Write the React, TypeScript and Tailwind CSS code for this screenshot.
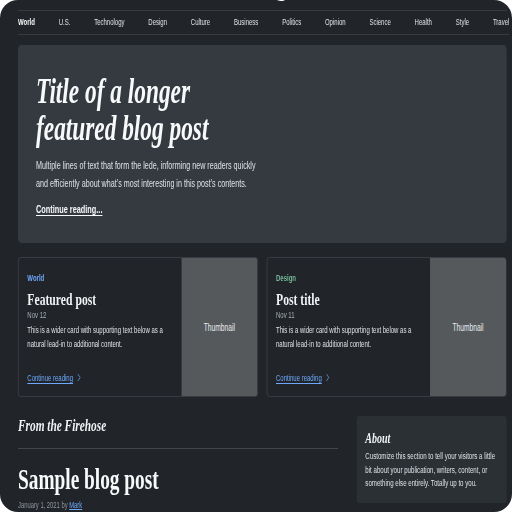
const sans = "font-['Liberation_Sans',Arial,sans-serif]";
const serif = "font-['Liberation_Serif','Times_New_Roman',serif]";

const navItems = [
  "World",
  "U.S.",
  "Technology",
  "Design",
  "Culture",
  "Business",
  "Politics",
  "Opinion",
  "Science",
  "Health",
  "Style",
  "Travel",
];

function Chevron() {
  return (
    <svg width="9" height="9" viewBox="0 0 16 16" className="inline-block ml-[4px] align-[-1px]">
      <path d="M5 2l6 6-6 6" fill="none" stroke="currentColor" strokeWidth="1.4" />
    </svg>
  );
}

function Card({ tag, tagColor, title, date }: { tag: string; tagColor: string; title: string; date: string }) {
  return (
    <div className="flex h-[140px] rounded-[4px] border border-[#3d4248] bg-[#212529] overflow-hidden">
      <div className="flex-1 flex flex-col pt-[14px] pb-[12px] px-[13px]">
        <div className={`text-[9px] leading-[12px] font-bold ${tagColor}`}>{tag}</div>
        <div className={`${serif} mt-[5px] text-[17.5px] leading-[20px] font-bold text-[#f1f3f5]`}>{title}</div>
        <div className="text-[9px] leading-[12px] text-[#a7adb3]">{date}</div>
        <p className="mt-[2px] text-[9px] leading-[14px] text-[#dee2e6]">
          This is a wider card with supporting text below as a natural lead-in to additional content.
        </p>
        <div className="mt-auto text-[9px] leading-[12px] text-[#6ea8fe]">
          <span className="underline underline-offset-2">Continue reading</span>
          <Chevron />
        </div>
      </div>
      <div className="w-[114px] bg-[#55595c] flex items-center justify-center text-[10px] text-[#e9ecef]">
        Thumbnail
      </div>
    </div>
  );
}

export default function App() {
  return (
    <div className="w-[512px] h-[512px] overflow-hidden rounded-[18px] bg-[#212529]">
      <div className={`w-[768px] origin-top-left scale-x-[0.6667] pl-[27px] pr-[8px] text-[#dee2e6] ${sans}`}>
        <header className="h-[11px] border-b border-[#383c41] overflow-hidden flex justify-center items-end pl-[10px]">
          <span className={`${serif} font-bold text-[40px] leading-none mb-[11px] text-[#f8f9fa]`}>Large</span>
        </header>
        <nav className="h-[24px] border-b border-[#383c41] flex items-center justify-between -mr-[4px] text-[9px] text-[#dee2e6]">
          {navItems.map((n, i) => (
            <span key={n} className={i === 0 ? "font-bold text-[#f8f9fa]" : ""}>
              {n}
            </span>
          ))}
        </nav>

        <section className="mt-[10px] h-[198px] rounded-[5px] bg-[#343a40] pt-[28px] px-[27px]">
          <h1 className={`${serif} italic font-bold text-[35px] leading-[37px] text-[#f8f9fa]`}>
            Title of a longer
            <br />
            featured blog post
          </h1>
          <p className="mt-[9px] text-[10.75px] leading-[18px] text-[#dee2e6]">
            Multiple lines of text that form the lede, informing new readers quickly
            <br />
            and efficiently about what’s most interesting in this post’s contents.
          </p>
          <p className="mt-[8px] text-[11px] leading-[18px] font-bold text-[#f8f9fa] underline underline-offset-2">
            Continue reading...
          </p>
        </section>

        <div className="mt-[14px] grid grid-cols-2 gap-[13px]">
          <Card tag="World" tagColor="text-[#6ea8fe]" title="Featured post" date="Nov 12" />
          <Card tag="Design" tagColor="text-[#75b798]" title="Post title" date="Nov 11" />
        </div>

        <div className="mt-[19px] grid grid-cols-[480px_1fr] gap-[28px]">
          <div>
            <h3 className={`${serif} italic font-bold text-[17px] leading-[20px] text-[#f1f3f5] pb-[12px] border-b border-[#41464b]`}>
              From the Firehose
            </h3>
            <h2 className={`${serif} mt-[14px] font-bold text-[29px] leading-[32px] text-[#f8f9fa]`}>Sample blog post</h2>
            <p className="mt-[4px] text-[8.75px] leading-[12px] text-[#8f959b]">
              January 1, 2021 by <span className="text-[#6ea8fe] underline">Mark</span>
            </p>
          </div>
          <aside className="h-[87px] rounded-[4px] bg-[#2b3035] pt-[13px] px-[13px]">
            <h4 className={`${serif} italic font-bold text-[15px] leading-[18px] text-[#f1f3f5]`}>About</h4>
            <p className="mt-[3px] text-[9.2px] leading-[13.5px] text-[#dee2e6]">
              Customize this section to tell your visitors a little bit about your publication, writers, content, or
              something else entirely. Totally up to you.
            </p>
          </aside>
        </div>
      </div>
    </div>
  );
}
